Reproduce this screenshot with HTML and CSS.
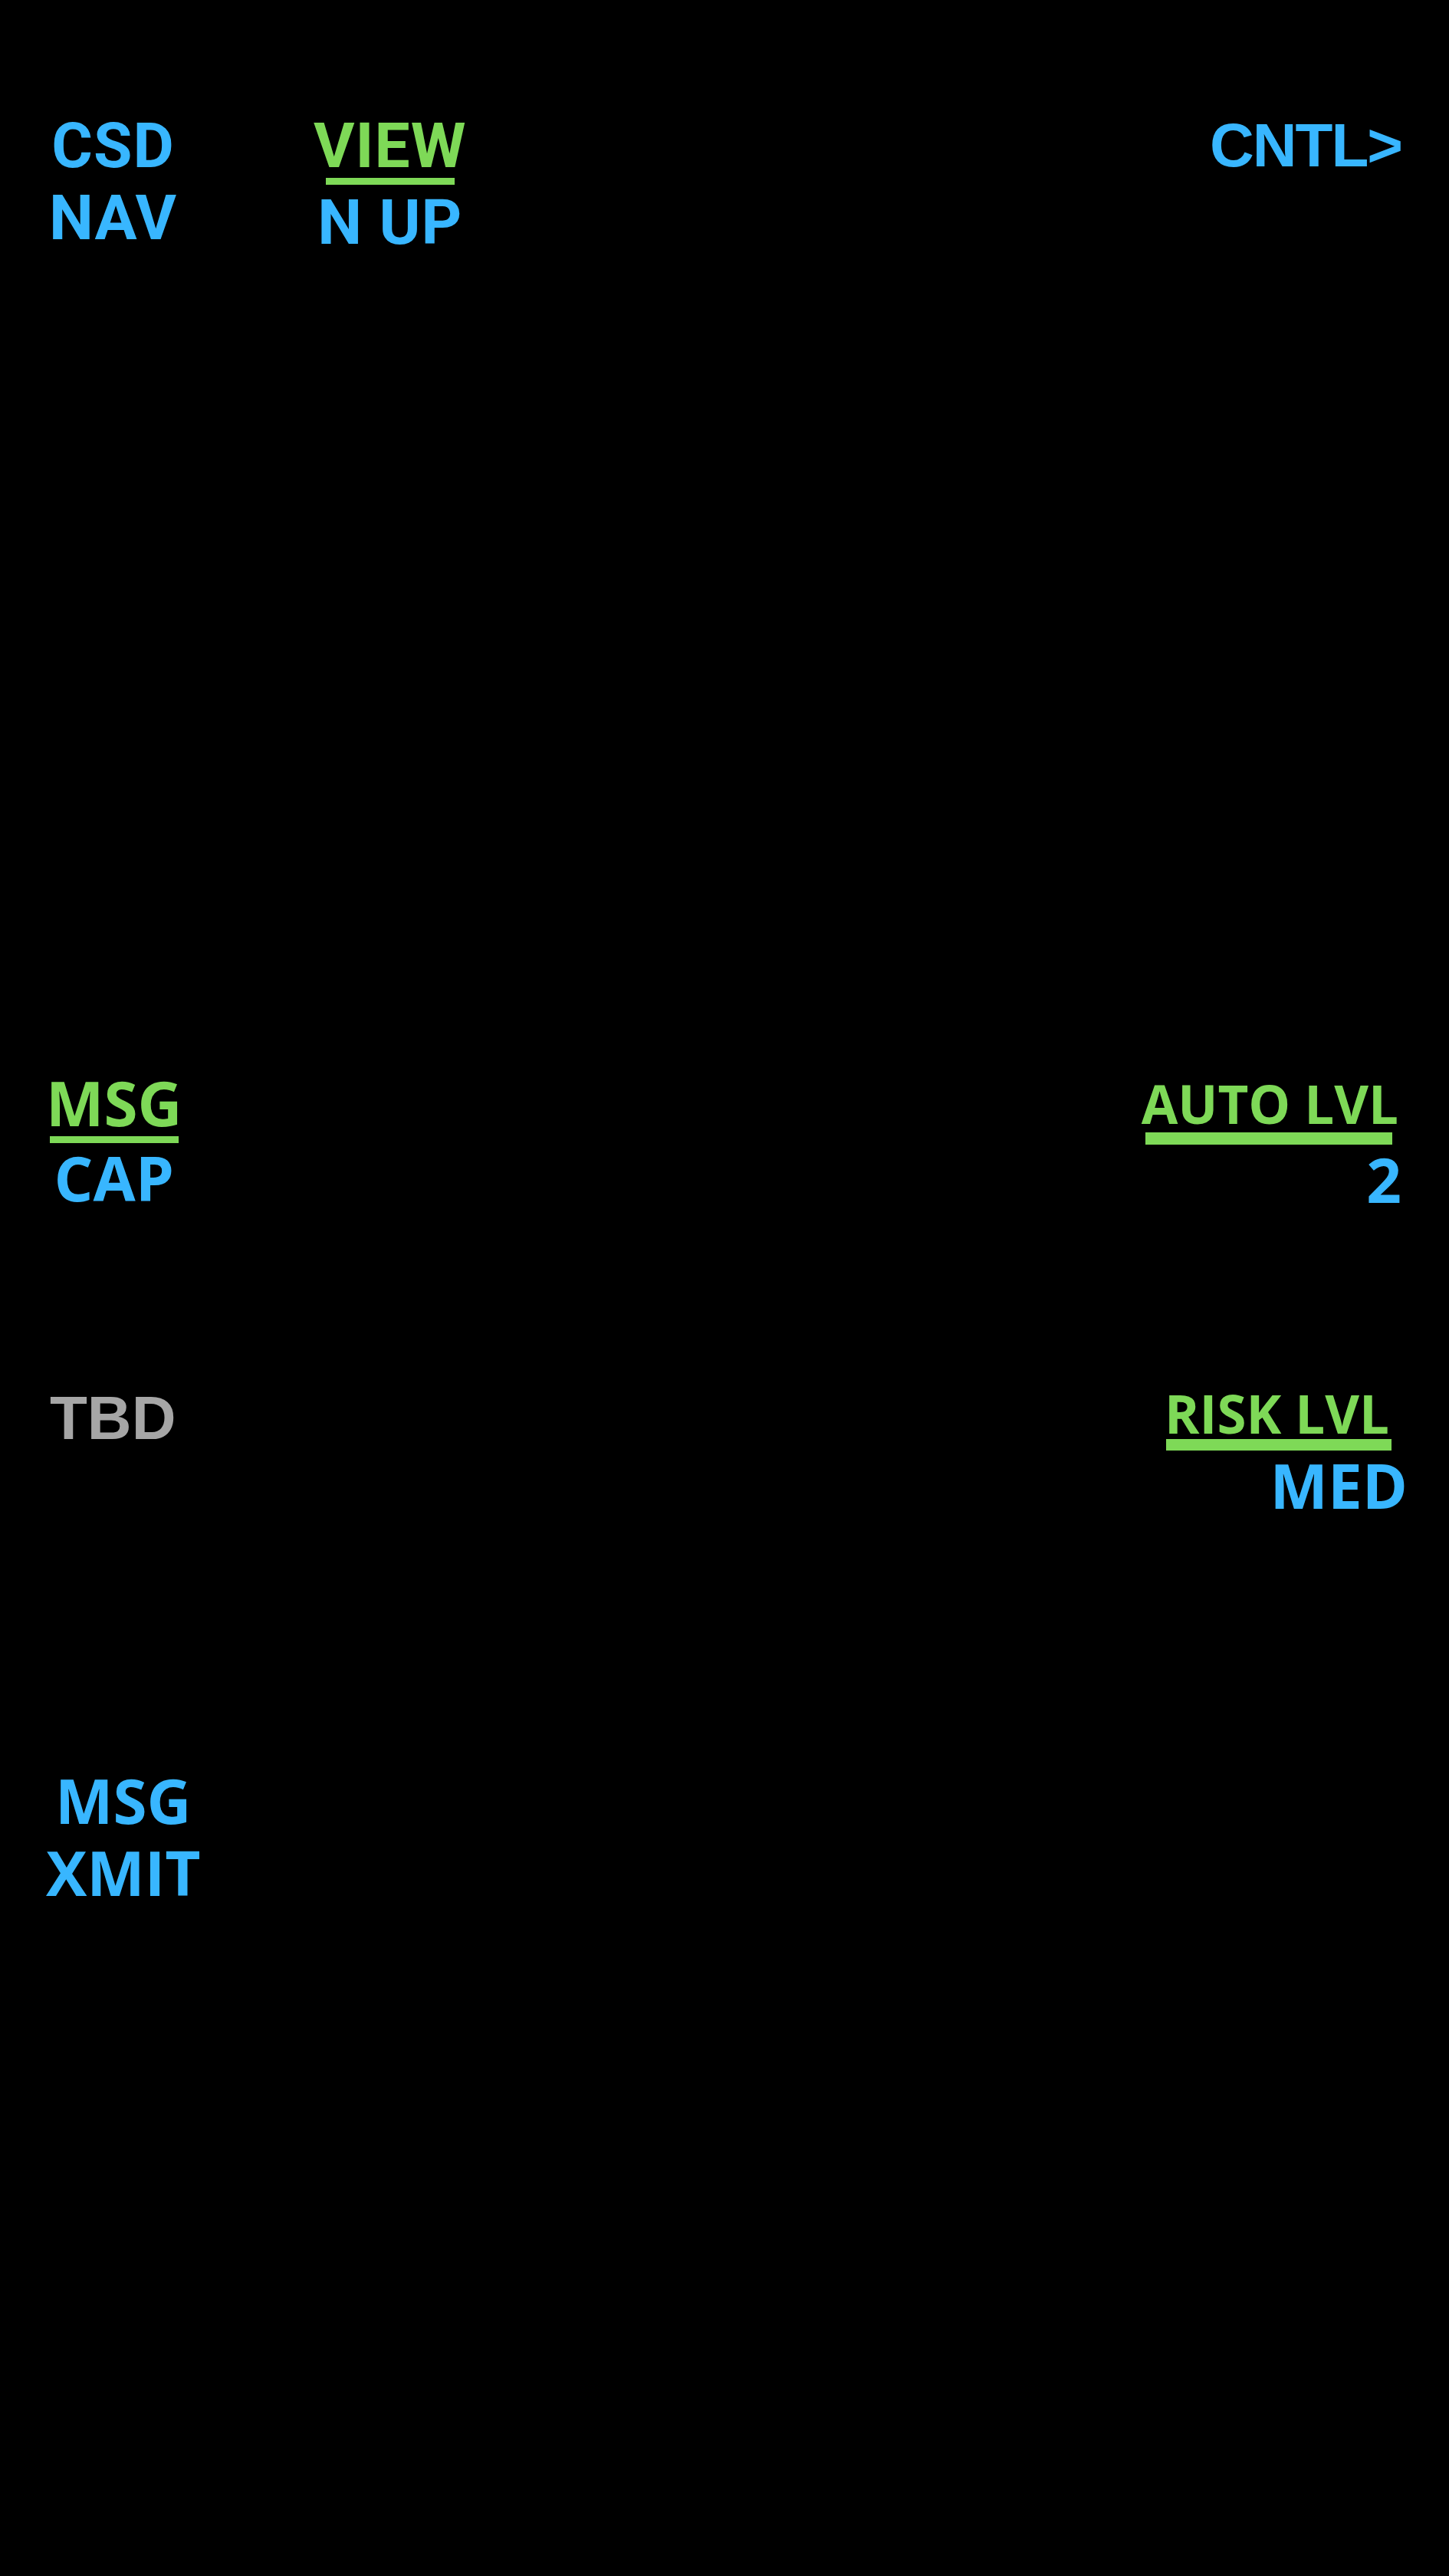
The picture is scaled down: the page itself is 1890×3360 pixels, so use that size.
FILE: index.html
```html
<!DOCTYPE html>
<html lang="en">
<head>
  <meta charset="UTF-8">
  <meta name="viewport" content="width=device-width, initial-scale=1.0">
  <title>MFD Softkeys</title>
  <link rel="stylesheet" href="styles.css">
</head>
<body>
  <main class="mfd">
    <!-- top bezel keys -->
    <div class="row row-top">
      <div class="key key-left key-nav din">
        <span class="line blue">CSD</span>
        <span class="line blue">NAV</span>
      </div>
      <div class="key key-view din">
        <span class="line green">VIEW</span>
        <span class="rule rule-view"></span>
        <span class="line blue nup">N UP</span>
      </div>
      <div class="key key-right">
        <span class="line blue arial cntl">CNTL&gt;</span>
      </div>
    </div>

    <!-- side keys -->
    <div class="row row-cap">
      <div class="key key-left">
        <span class="line green">MSG</span>
        <span class="rule rule-msg"></span>
        <span class="line blue">CAP</span>
      </div>
      <div class="key key-right key-auto">
        <span class="line small green auto">AUTO LVL</span>
        <span class="rule rule-auto"></span>
        <span class="line blue level">2</span>
      </div>
    </div>

    <div class="row row-risk">
      <div class="key key-left">
        <span class="line grey arial tbd">TBD</span>
      </div>
      <div class="key key-right key-risk">
        <span class="line small green risk">RISK LVL</span>
        <span class="rule rule-risk"></span>
        <span class="line blue">MED</span>
      </div>
    </div>

    <div class="row row-xmit">
      <div class="key key-left">
        <span class="line blue">MSG</span>
        <span class="line blue">XMIT</span>
      </div>
    </div>
  </main>
</body>
</html>
```

FILE: styles.css
```css
html, body {
  margin: 0;
  background: #000;
}
body {
  font-family: "Open Sans", "Liberation Sans", sans-serif;
  font-weight: 700;
}
.mfd {
  width: 1890px;
  min-height: 3360px;
  box-sizing: border-box;
  padding: 143px 54px 0 60px;
}
.row {
  display: flex;
  justify-content: space-between;
  align-items: flex-start;
}
.row-top {
  justify-content: flex-start;
}
.row-cap {
  margin-top: 1054px;
}
.row-risk {
  margin-top: 218px;
}
.row-xmit {
  margin-top: 317px;
}
.key {
  display: flex;
  flex-direction: column;
}
.key-left {
  align-items: center;
}
.key-right {
  align-items: flex-end;
  margin-left: auto;
}
.key-nav {
  margin-left: 4px;
}
.key-view {
  align-items: center;
  margin-left: 178px;
}
.line {
  display: block;
  font-size: 80px;
  line-height: 94px;
  white-space: nowrap;
}
.line.small {
  font-size: 69px;
  line-height: 80px;
}
.din .line {
  font-family: Roboto, "Liberation Sans", sans-serif;
  font-size: 82px;
  letter-spacing: 1px;
}
.arial {
  font-family: "Liberation Sans", Arial, sans-serif;
}
.blue {
  color: #38b6ff;
}
.green {
  color: #7ed957;
}
.grey {
  color: #a6a6a6;
}
.rule {
  display: block;
  background: #7ed957;
}
.rule-view {
  width: 168px;
  height: 9px;
  margin-top: -5px;
}
.nup {
  margin-top: 2px;
}
.cntl {
  letter-spacing: -2px;
  margin-right: 8px;
}
.rule-msg {
  width: 168px;
  height: 9px;
  margin-top: -3px;
  margin-bottom: -2px;
}
.tbd {
  margin-left: 5px;
}
.key-auto {
  margin-top: 8px;
}
.auto {
  margin-right: 12px;
}
.rule-auto {
  width: 322px;
  height: 16px;
  margin-top: -2px;
  margin-bottom: -2px;
  margin-right: 20px;
}
.level {
  margin-right: 8px;
}
.risk {
  margin-right: 24px;
}
.rule-risk {
  width: 294px;
  height: 15px;
  margin-top: -6px;
  margin-bottom: -2px;
  margin-right: 21px;
}
```
